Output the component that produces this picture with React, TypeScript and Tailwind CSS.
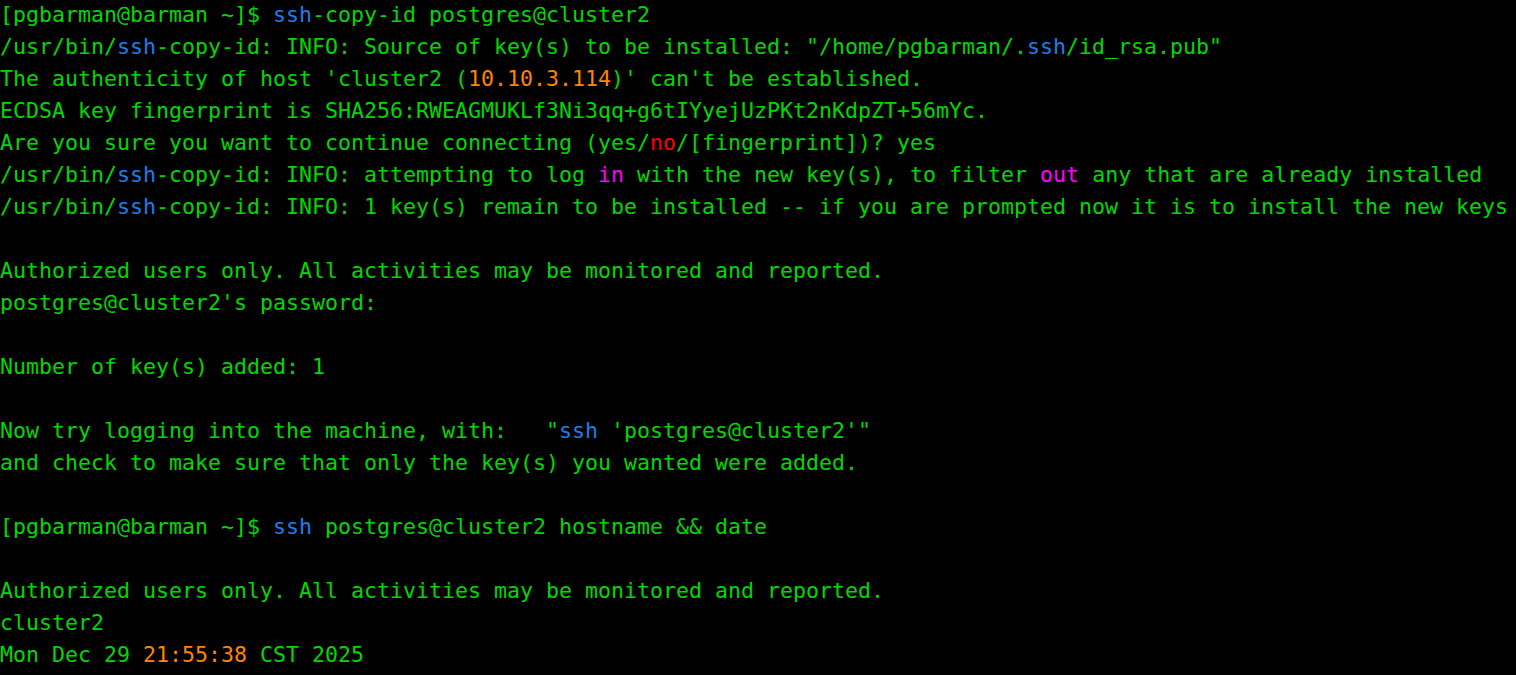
import React from "react";

const G = "text-[#00d800]";
const B = "text-[#1f7ee8]";
const O = "text-[#ff8400]";
const R = "text-[#ff0000]";
const M = "text-[#ff00ff]";

type Seg = [string, string?];
const lines: Seg[][] = [
  [["[pgbarman@barman ~]$ "], ["ssh", B], ["-copy-id postgres@cluster2"]],
  [["/usr/bin/"], ["ssh", B], ["-copy-id: INFO: Source of key(s) to be installed: \"/home/pgbarman/."], ["ssh", B], ["/id_rsa.pub\""]],
  [["The authenticity of host 'cluster2 ("], ["10.10.3.114", O], [")' can't be established."]],
  [["ECDSA key fingerprint is SHA256:RWEAGMUKLf3Ni3qq+g6tIYyejUzPKt2nKdpZT+56mYc."]],
  [["Are you sure you want to continue connecting (yes/"], ["no", R], ["/[fingerprint])? yes"]],
  [["/usr/bin/"], ["ssh", B], ["-copy-id: INFO: attempting to log "], ["in", M], [" with the new key(s), to filter "], ["out", M], [" any that are already installed"]],
  [["/usr/bin/"], ["ssh", B], ["-copy-id: INFO: 1 key(s) remain to be installed -- if you are prompted now it is to install the new keys"]],
  [],
  [["Authorized users only. All activities may be monitored and reported."]],
  [["postgres@cluster2's password: "]],
  [],
  [["Number of key(s) added: 1"]],
  [],
  [["Now try logging into the machine, with:   \""], ["ssh", B], [" 'postgres@cluster2'\""]],
  [["and check to make sure that only the key(s) you wanted were added."]],
  [],
  [["[pgbarman@barman ~]$ "], ["ssh", B], [" postgres@cluster2 hostname && date"]],
  [],
  [["Authorized users only. All activities may be monitored and reported."]],
  [["cluster2"]],
  [["Mon Dec 29 "], ["21:55:38", O], [" CST 2025"]],
];

export default function App() {
  return (
    <div
      className={`w-[1516px] h-[675px] bg-black overflow-hidden ${G} text-[21.6px] leading-[32px] whitespace-pre`}
      style={{ fontFamily: '"DejaVu Sans Mono", "Liberation Mono", monospace' }}
    >
      <div className="-mt-px">
        {lines.map((l, i) => (
          <div key={i} className="h-[32px]">
            {l.map(([t, c], j) => (
              <span key={j} className={c}>
                {t}
              </span>
            ))}
          </div>
        ))}
      </div>
    </div>
  );
}
